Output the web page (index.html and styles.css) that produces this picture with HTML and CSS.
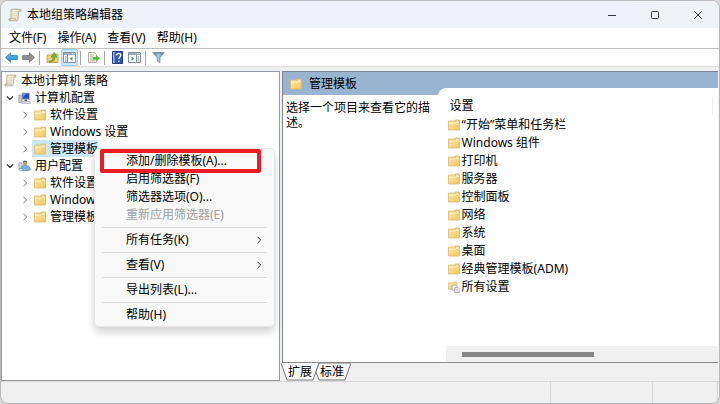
FILE: index.html
```
<!DOCTYPE html>
<html lang="zh-CN">
<head>
<meta charset="utf-8">
<meta name="viewport" content="width=device-width, initial-scale=1">
<title>本地组策略编辑器</title>
<link rel="stylesheet" href="styles.css">
</head>
<body>
<svg class="defs" aria-hidden="true">
  <defs>
    <linearGradient id="g-folder" x1="0" y1="0" x2="1" y2="1"><stop offset="0" stop-color="#fde9a6"/><stop offset="1" stop-color="#f0c665"/></linearGradient>
    <linearGradient id="g-paper" x1="0" y1="0" x2="1" y2="0"><stop offset="0" stop-color="#d9cfb4"/><stop offset=".4" stop-color="#fdfaf0"/><stop offset="1" stop-color="#e2d8bd"/></linearGradient>
    <linearGradient id="g-blue" x1="0" y1="0" x2="0" y2="1"><stop offset="0" stop-color="#6cc6f5"/><stop offset="1" stop-color="#1c86d1"/></linearGradient>
    <linearGradient id="g-funnel" x1="0" y1="0" x2="1" y2="0"><stop offset="0" stop-color="#4d7590"/><stop offset=".5" stop-color="#a9c8da"/><stop offset="1" stop-color="#4d7590"/></linearGradient>
    <symbol id="folder" viewBox="0 0 12 12"><path d="M.5 2h6l.8-1h4.2v10H.5z" fill="url(#g-folder)" stroke="#dcb968" stroke-width=".8"/><path d="M7.4 1.4h3.4v1.7H7.4z" fill="#fffdf2" stroke="#d0aa5c" stroke-width=".6"/><path d="M1 4.4h6l1-.9h3" fill="none" stroke="#fff3c6" stroke-width=".8"/></symbol>
    <symbol id="scroll" viewBox="0 0 14 14"><path d="M3.2 1.2h9c1 0 1.2 1.8 0 2h-1.4l-.9 8.2c-.1 1-.7 1.4-1.6 1.4H1.8c-1.4 0-1.4-2 0-2h1z" fill="url(#g-paper)" stroke="#a99d80" stroke-width=".8"/><path d="M4.5 3.5h4.8M4.3 5.4h4.8M4.1 7.3h4.8M4 9.1h4.3" stroke="#c3b999" stroke-width=".6"/><path d="M1.8 10.8h6.3c-.8.6-.6 1.8.2 2" fill="#ede5cf" stroke="#a99d80" stroke-width=".7"/></symbol>
    <symbol id="computer" viewBox="0 0 13 12"><path d="M.8 3h3v7.5h-3z" fill="#c6cbd2" stroke="#7e8791" stroke-width=".6"/><path d="M4 1h7.5v6.2H4z" fill="#2449b8" stroke="#b3bfd0" stroke-width=".9"/><path d="M5 1.8h3L5 5.5z" fill="#6d91ec"/><path d="M6.7 7.5h2l.5 1.8H6.3z" fill="#56606e"/><path d="M3.6 9.4h8l1 2H4z" fill="#dce0e6" stroke="#929ba8" stroke-width=".6"/></symbol>
    <symbol id="user" viewBox="0 0 13 12"><path d="M.9 2.8h3v5.6h-3z" fill="#d5dbe1" stroke="#87919a" stroke-width=".6"/><circle cx="7" cy="2.9" r="2.2" fill="#c39a72"/><path d="M4.8 2.6C5 .1 8.7 0 9.2 2.3L7.2 1.8z" fill="#6e5846"/><path d="M3 9.6c0-3.2 1.4-4.4 4-4.4 3 0 5.2 1.6 5.4 4.6-1.6 1.2-7 1.4-9.4-.2z" fill="#7fb4dc" stroke="#3f7eae" stroke-width=".6"/><path d="M.8 9.3c1.2-1.2 3.3-1 4.2.3.3 1.4-3.7 1.7-4.2-.3z" fill="#dfe9f2" stroke="#5c88ac" stroke-width=".6"/></symbol>
    <symbol id="settings-all" viewBox="0 0 13 13"><path d="M.5 1.8h4.6l.8-.8h3.6v8H.5z" fill="url(#g-folder)" stroke="#dcb968" stroke-width=".8"/><path d="M4.5 4.5h4l1 1V10h-5z" fill="#fff" stroke="#8c98a2" stroke-width=".7"/><path d="M7.3 7h3.5l1.4 1.4v4.1H7.3z" fill="#fff" stroke="#7e8b96" stroke-width=".7"/><path d="M8.3 9h2.8M8.3 10.7h2.8" stroke="#8c98a2" stroke-width=".6"/></symbol>
    <symbol id="right" viewBox="0 0 8 8"><path d="m2.5.8 3.2 3.2-3.2 3.2" fill="none" stroke="currentColor"/></symbol>
    <symbol id="down" viewBox="0 0 8 8"><path d="m.9 2.3 3.1 3.2 3.1-3.2" fill="none" stroke="currentColor" stroke-width="1.2"/></symbol>
    <symbol id="arrow" viewBox="0 0 13 11"><path d="m.6 5.5 5-4.7v2.8h6.8v3.8H5.6v2.8z"/></symbol>
    <symbol id="panel" viewBox="0 0 13 11"><path d="M.5.5h12v10H.5z" fill="#f8f9fa" stroke="#87919a"/><path d="M1 1h11v2H1z" fill="#9eabb8"/><path d="M9 1.5h1M11 1.5h.8" stroke="#fff" stroke-width=".8"/></symbol>
  </defs>
</svg>
<div class="window">
  <header class="titlebar">
    <svg class="app-icon"><use href="#scroll"/></svg>
    <h1>本地组策略编辑器</h1>
    <div class="window-buttons">
      <button aria-label="最小化"><svg viewBox="0 0 10 10"><path d="M1 5.5h8"/></svg></button>
      <button aria-label="最大化"><svg viewBox="0 0 10 10"><rect x="1.5" y="1.5" width="7" height="7" rx="1"/></svg></button>
      <button aria-label="关闭"><svg viewBox="0 0 10 10"><path d="m1.3 1.3 7.4 7.4m0-7.4L1.3 8.7"/></svg></button>
    </div>
  </header>
  <nav class="menubar">
    <button>文件(F)</button><button>操作(A)</button><button>查看(V)</button><button>帮助(H)</button>
  </nav>
  <div class="toolbar" role="toolbar">
    <button aria-label="后退"><svg viewBox="0 0 13 11" fill="url(#g-blue)" stroke="#2a78b2" stroke-width=".8"><use href="#arrow"/></svg></button>
    <button aria-label="前进"><svg class="flip" viewBox="0 0 13 11" fill="#929292" stroke="#686868" stroke-width=".8"><use href="#arrow"/></svg></button>
    <span class="divider"></span>
    <button aria-label="上一级"><svg viewBox="0 0 13 11"><path d="M1 3h4l1-1h6v8.5H1z" fill="#f4cf72" stroke="#c49b45" stroke-width=".8"/><path d="M3.4 9c3 0 3.6-1.8 3.6-4H5L8.3.5 11 5H9c0 3-1.5 5-5.6 5z" fill="#66bd43" stroke="#39882a" stroke-width=".5"/></svg></button>
    <button class="pressed" aria-label="显示控制台树" aria-pressed="true"><svg viewBox="0 0 13 11"><use href="#panel"/><path d="M4.5 3v7.5" stroke="#87919a"/><path d="M2 5h1.5M2 7h1.5M2 9h1.5" stroke="#6086af"/><path d="M9.5 4.5v4.3L6.8 6.7z" fill="#469a61"/></svg></button>
    <span class="divider"></span>
    <button aria-label="导出列表"><svg viewBox="0 0 13 11"><path d="M1.5.5h6l2 2v8h-8z" fill="#fffdf3" stroke="#9b9c91" stroke-width=".8"/><path d="M3 3h4M3 5h3M3 7h3M3 9h5" stroke="#90906d" stroke-width=".7"/><path d="M6 5h3.2V3L13 6.3 9.2 9.5V7.7H6z" fill="#52bb3d"/></svg></button>
    <span class="divider"></span>
    <button aria-label="帮助"><svg viewBox="0 0 13 13"><path d="M1.5.5h10v12h-10z" fill="#3156ba" stroke="#243b89"/><path d="M2 1h1.6v11H2z" fill="#9baee2"/><path d="M5.5 4.6c0-3 4.3-2.8 4.3-.3 0 1.6-2 1.7-2 3.8" fill="none" stroke="#fff" stroke-width="1.4"/><circle cx="7.8" cy="10.3" r=".9" fill="#fff"/></svg></button>
    <button aria-label="显示操作窗格"><svg viewBox="0 0 13 11"><use href="#panel"/><path d="M8.5 3v7.5" stroke="#87919a"/><path d="M9.6 5h1.6M9.6 7h1.6M9.6 9h1.6" stroke="#6086af"/><path d="M3.5 4.5v4.3l2.7-2.1z" fill="#3fa747"/></svg></button>
    <span class="divider"></span>
    <button aria-label="筛选器"><svg viewBox="0 0 13 12"><path d="M.7 1h11.6L8 6.3V11l-2.7-1V6.3z" fill="url(#g-funnel)" stroke="#668296" stroke-width=".6"/><ellipse cx="6.5" cy="1.5" rx="5.4" ry=".8" fill="#7195ad"/></svg></button>
  </div>
  <main class="workspace">
    <section class="tree" aria-label="控制台树">
      <ul>
        <li>
          <div class="node root"><svg><use href="#scroll"/></svg><span>本地计算机 策略</span></div>
          <ul>
            <li>
              <div class="node branch"><button aria-label="折叠"><svg><use href="#down"/></svg></button><svg><use href="#computer"/></svg><span>计算机配置</span></div>
              <ul>
                <li class="node leaf"><button aria-label="展开"><svg><use href="#right"/></svg></button><svg><use href="#folder"/></svg><span>软件设置</span></li>
                <li class="node leaf"><button aria-label="展开"><svg><use href="#right"/></svg></button><svg><use href="#folder"/></svg><span>Windows 设置</span></li>
                <li class="node leaf selected"><button aria-label="展开"><svg><use href="#right"/></svg></button><svg><use href="#folder"/></svg><span>管理模板</span>
                  <div class="context-menu" role="menu">
                    <button role="menuitem" class="marked">添加/删除模板(A)...</button>
                    <button role="menuitem">启用筛选器(F)</button>
                    <button role="menuitem">筛选器选项(O)...</button>
                    <button role="menuitem" disabled>重新应用筛选器(E)</button>
                    <hr>
                    <button role="menuitem">所有任务(K)<svg><use href="#right"/></svg></button>
                    <hr>
                    <button role="menuitem">查看(V)<svg><use href="#right"/></svg></button>
                    <hr>
                    <button role="menuitem">导出列表(L)...</button>
                    <hr>
                    <button role="menuitem">帮助(H)</button>
                  </div>
                </li>
              </ul>
            </li>
            <li>
              <div class="node branch"><button aria-label="折叠"><svg><use href="#down"/></svg></button><svg><use href="#user"/></svg><span>用户配置</span></div>
              <ul>
                <li class="node leaf"><button aria-label="展开"><svg><use href="#right"/></svg></button><svg><use href="#folder"/></svg><span>软件设置</span></li>
                <li class="node leaf"><button aria-label="展开"><svg><use href="#right"/></svg></button><svg><use href="#folder"/></svg><span>Windows 设置</span></li>
                <li class="node leaf"><button aria-label="展开"><svg><use href="#right"/></svg></button><svg><use href="#folder"/></svg><span>管理模板</span></li>
              </ul>
            </li>
          </ul>
        </li>
      </ul>
    </section>
    <section class="result">
      <div class="details">
        <h2><svg><use href="#folder"/></svg>管理模板</h2>
        <div class="columns">
          <p>选择一个项目来查看它的描述。</p>
          <div class="list">
            <h3>设置</h3>
            <ul>
              <li><svg><use href="#folder"/></svg>“开始”菜单和任务栏</li>
              <li><svg><use href="#folder"/></svg>Windows 组件</li>
              <li><svg><use href="#folder"/></svg>打印机</li>
              <li><svg><use href="#folder"/></svg>服务器</li>
              <li><svg><use href="#folder"/></svg>控制面板</li>
              <li><svg><use href="#folder"/></svg>网络</li>
              <li><svg><use href="#folder"/></svg>系统</li>
              <li><svg><use href="#folder"/></svg>桌面</li>
              <li><svg><use href="#folder"/></svg>经典管理模板(ADM)</li>
              <li><svg><use href="#settings-all"/></svg>所有设置</li>
            </ul>
            <div class="scrollbar"><div class="thumb"></div></div>
          </div>
        </div>
      </div>
      <div class="tabs" role="tablist">
        <button role="tab" aria-selected="true"><svg viewBox="0 0 38 18"><path d="M0 0 6 17h26l6-17"/></svg><span>扩展</span></button>
        <button role="tab" aria-selected="false"><svg viewBox="0 0 38 18"><path d="M6 0h32l-6 17H6L3 9z"/></svg><span>标准</span></button>
      </div>
    </section>
  </main>
  <footer class="statusbar"><span></span><span></span><span></span></footer>
</div>
</body>
</html>
```
FILE: styles.css
```
* { box-sizing: border-box; }
body {
  margin: 0;
  background: #d9d9d9;
  color: #000;
  font: 12px/18px "Noto Sans", "Noto Sans CJK SC", sans-serif;
}
h1, h2, h3, p, ul { margin: 0; padding: 0; font-size: 12px; font-weight: 400; }
ul { list-style: none; }
button { margin: 0; padding: 0; border: 0; background: none; color: inherit; font: inherit; white-space: nowrap; }
svg { display: block; flex: none; }
.defs { position: absolute; width: 0; height: 0; }

.window {
  display: flex;
  flex-direction: column;
  min-height: 100vh;
  border: 1px solid #b8b9bb;
  border-radius: 8px;
  overflow: hidden;
  background: #f0f0f0;
}
.titlebar { display: flex; align-items: center; height: 27px; padding-left: 7px; background: linear-gradient(90deg, #eef3f8, #eef2fb 75%, #eef3f7); }
.app-icon { width: 14px; height: 14px; margin-right: 5px; }
.window-buttons { display: flex; margin-left: auto; }
.window-buttons button { display: grid; place-items: center; width: 43px; height: 27px; }
.window-buttons svg { width: 10px; height: 10px; fill: none; stroke: #333; }
.menubar { display: flex; gap: 11px; height: 21px; padding-left: 8px; background: #fff; border-bottom: 1px solid #bfc0c2; line-height: 20px; }

.toolbar { display: flex; align-items: center; height: 18px; padding-left: 2px; background: #fff; border-bottom: 1px solid #dcdcdc; }
.toolbar button { display: grid; place-items: center; width: 17px; height: 17px; }
.toolbar svg { width: 13px; height: 13px; }
.toolbar .flip { transform: scaleX(-1); }
.toolbar .pressed { background: #cce8ff; border: 1px solid #99d1ff; border-radius: 2px; }
.divider { width: 1px; height: 14px; margin: 0 4px 0 2px; background: #a8a8a8; }

.workspace { display: grid; grid-template-columns: 39% 1fr; flex: 1; padding-top: 4px; }
.tree { margin-right: 1px; background: #fff; border: 1px solid #949aa3; }
.node { display: flex; align-items: center; position: relative; height: 17px; line-height: 17px; white-space: nowrap; }
.node > svg { width: 12px; height: 12px; margin-right: 4px; }
.node > button { width: 8px; margin-right: 5px; color: #777; }
.node > button svg { width: 8px; height: 8px; }
.root { padding-left: 2px; }
.root > svg { width: 13px; height: 13px; }
.branch { padding-left: 4px; }
.branch > button { margin-right: 4px; color: #222; }
.branch > svg { width: 13px; }
.leaf { padding-left: 19px; }
.selected::before { content: ""; position: absolute; inset: 0 auto 0 30px; width: 66px; background: #cce8ff; }
.selected > * { position: relative; }

.selected > .context-menu {
  position: absolute;
  left: 92px;
  top: 8px;
  z-index: 2;
  width: 181px;
  padding: 3px 0 2px;
  background: #f9f9f9;
  border: 1px solid #e6e6e6;
  border-radius: 5px;
  box-shadow: 0 5px 8px rgb(0 0 0 / 18%);
  line-height: 18px;
}
.context-menu button { display: flex; align-items: center; position: relative; width: 100%; height: 18px; padding: 0 11px 0 31px; }
.context-menu button:disabled { color: #a0a0a0; }
.context-menu svg { width: 8px; height: 8px; margin-left: auto; color: #333; }
.context-menu hr { height: 1px; margin: 3px 7px; border: 0; background: #dcdcdc; }
.marked::after { content: ""; position: absolute; inset: -3px 13px -3px 5px; border: 4px solid #ed1c24; border-radius: 2px; }

.result { display: flex; flex-direction: column; min-width: 0; }
.details { display: flex; flex-direction: column; flex: 1; margin-right: 1px; margin-left: 1px; background: #fff; border-top: 1px solid #7e858d; border-left: 1px solid #7e858d; border-bottom: 1px solid #8a8a8a; }
.details h2 { display: flex; align-items: center; gap: 7px; height: 23px; padding-left: 7px; background: #99b4d1; }
.details h2 svg { width: 12px; height: 12px; }
.columns { display: grid; grid-template-columns: 36% 1fr; flex: 1; }
.columns p { padding: 5px 3px; line-height: 15px; }
.list { display: flex; flex-direction: column; margin-top: -7px; margin-left: -2px; padding-left: 8px; background: #fff; border-top-left-radius: 8px; }
.list h3 { margin: 9px 5px 0 0; padding-left: 4px; border-right: 1px solid #eee; }
.list li { display: flex; align-items: center; gap: 2px; height: 18px; padding-left: 2px; }
.list ul { padding-top: 1px; }
.list li svg { width: 12px; height: 12px; }
.scrollbar { display: flex; align-items: center; height: 16px; margin-top: auto; padding: 0 16px; background: #f0f0f0; }
.thumb { width: 55%; height: 5px; background: #868686; }

.tabs { display: flex; height: 18px; }
.tabs button { position: relative; width: 38px; height: 18px; }
.tabs button + button { margin-left: -6px; }
.tabs svg { position: absolute; inset: 0; fill: #f4f4f4; stroke: #777; }
.tabs [aria-selected="true"] svg { fill: #fff; }
.tabs span { position: relative; }

.statusbar { display: flex; justify-content: flex-end; height: 22px; border-top: 1px solid #d9d9d9; padding-right: 1px; }
.statusbar span { border-right: 1px solid #d5d5d5; }
.statusbar span:nth-child(2) { flex: 0 0 102px; }
.statusbar span:nth-child(3) { flex: 0 0 65px; }
```
